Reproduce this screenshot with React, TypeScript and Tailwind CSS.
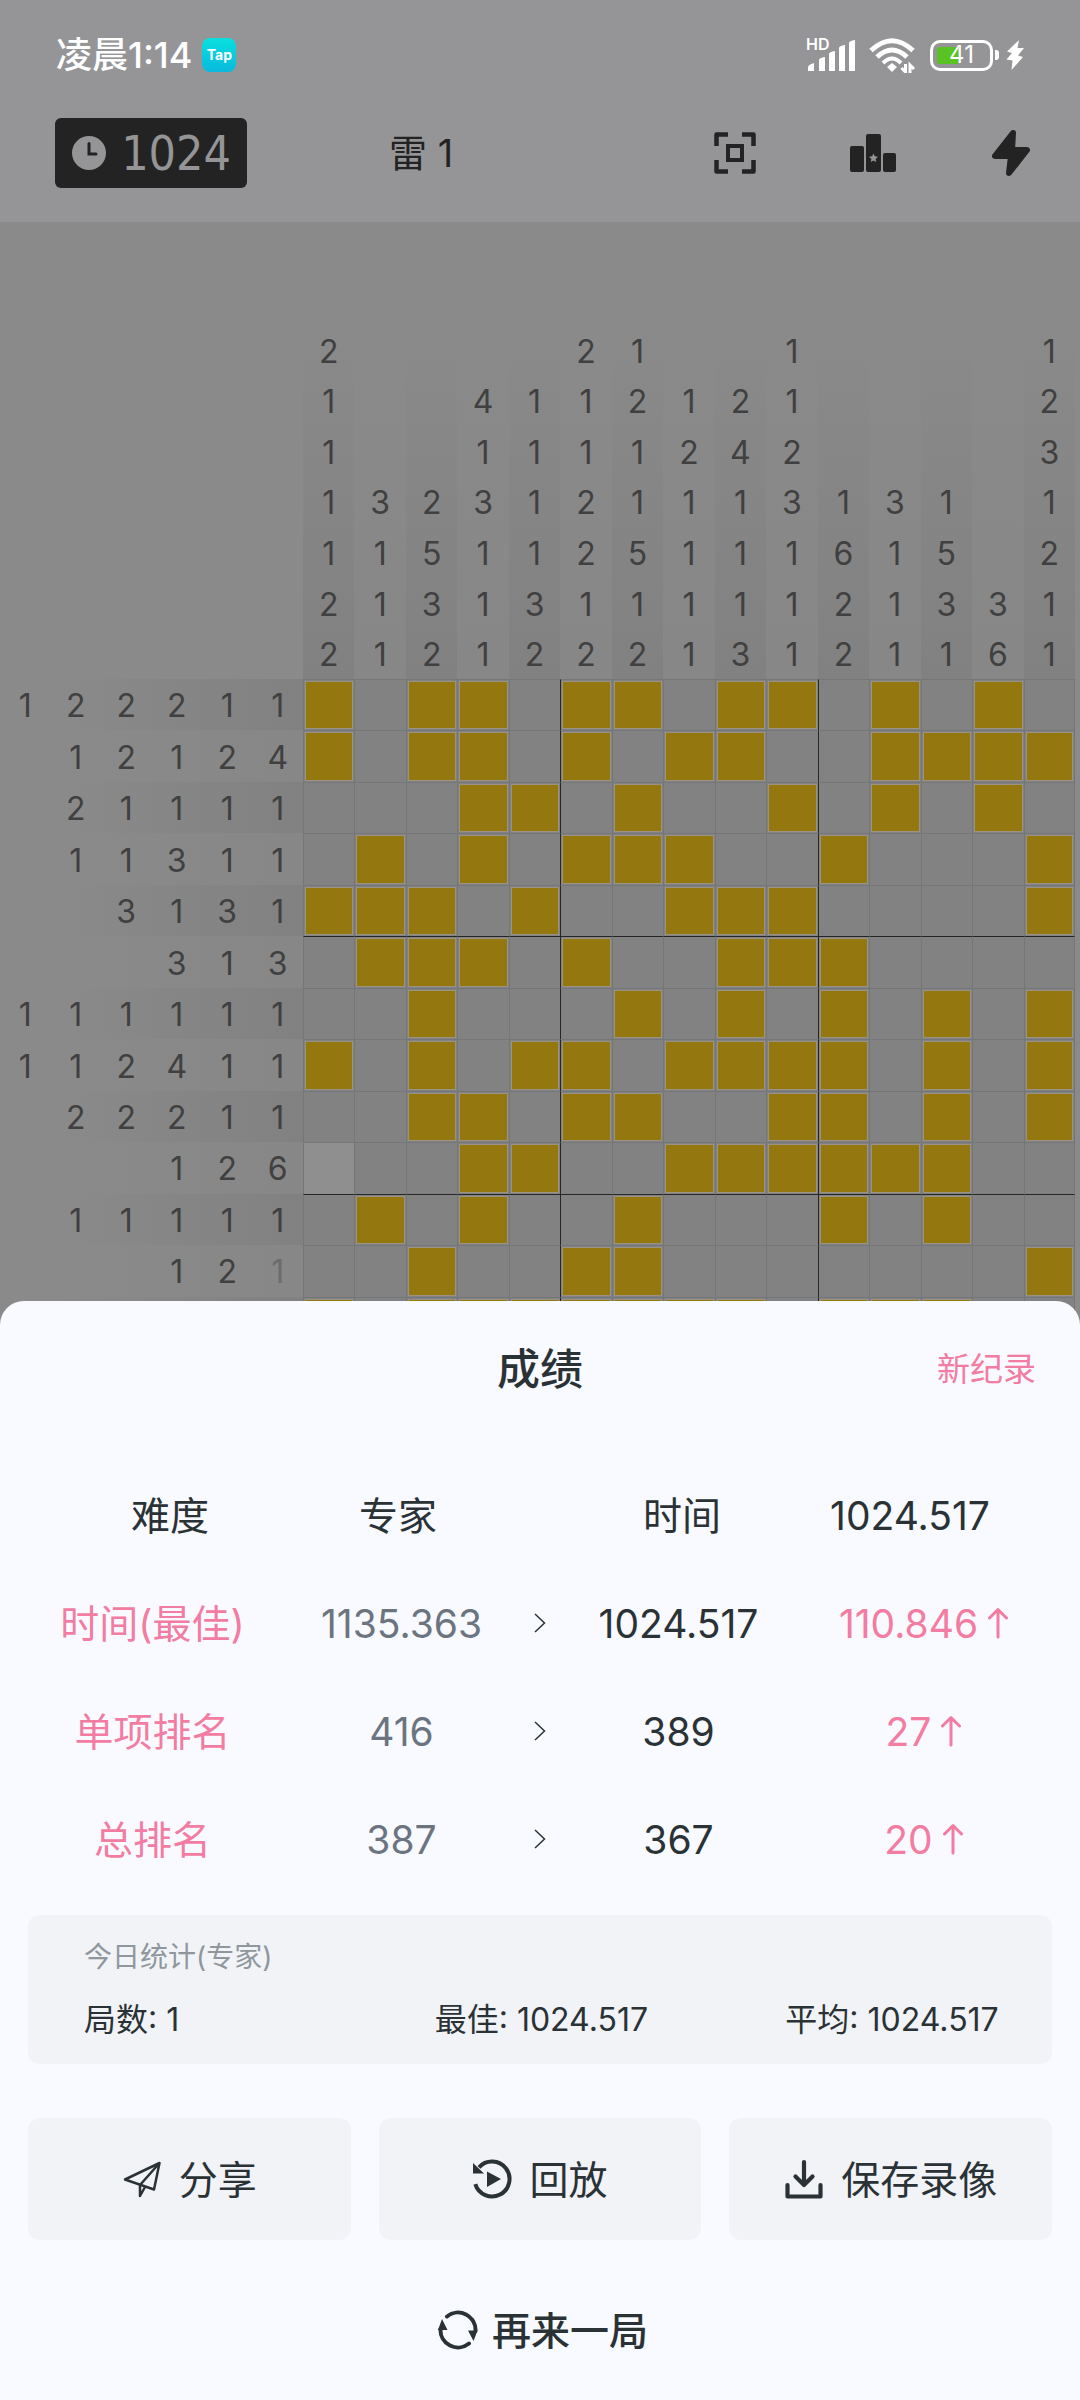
import React from 'react';

const rowClues: number[][] = [
  [1, 2, 2, 2, 1, 1],
  [1, 2, 1, 2, 4],
  [2, 1, 1, 1, 1],
  [1, 1, 3, 1, 1],
  [3, 1, 3, 1],
  [3, 1, 3],
  [1, 1, 1, 1, 1, 1],
  [1, 1, 2, 4, 1, 1],
  [2, 2, 2, 1, 1],
  [1, 2, 6],
  [1, 1, 1, 1, 1],
  [1, 2, 1],
  [],
];

const columnClues: number[][] = [
  [2, 1, 1, 1, 1, 2, 2],
  [3, 1, 1, 1],
  [2, 5, 3, 2],
  [4, 1, 3, 1, 1, 1],
  [1, 1, 1, 1, 3, 2],
  [2, 1, 1, 2, 2, 1, 2],
  [1, 2, 1, 1, 5, 1, 2],
  [1, 2, 1, 1, 1, 1],
  [2, 4, 1, 1, 1, 3],
  [1, 1, 2, 3, 1, 1, 1],
  [1, 6, 2, 2],
  [3, 1, 1, 1],
  [1, 5, 3, 1],
  [3, 6],
  [1, 2, 3, 1, 2, 1, 1],
];

// '#' = filled, 'o' = opened, '.' = untouched
const board: string[] = [
  '#.##.##.##.#.#.',
  '#.##.#.##..####',
  '...##.#..#.#.#.',
  '.#.#.###..#...#',
  '###.#..###....#',
  '.###.#..###....',
  '..#...#.#.#.#.#',
  '#.#.##.####.#.#',
  '..##.##..##.#.#',
  'o..##..######..',
  '.#.#..#...#.#..',
  '..#..##.......#',
  '#.#######.###..',
];

const records = [
  { label: '时间(最佳)', before: '1135.363', after: '1024.517', delta: '110.846' },
  { label: '单项排名', before: '416', after: '389', delta: '27' },
  { label: '总排名', before: '387', after: '367', delta: '20' },
];

const SignalIcon = () => (
  <svg viewBox="0 0 50 34" className="h-[34px] w-[50px]" fill="#fff" aria-hidden="true">
    <path d="M2 33v-4q0-2 6-4v8zM13 33V22q0-2 6-3v14zM23 33V16q0-2 6-3v20zM33 33V10q0-2 6-3v26zM43 33V5q0-2 6-3v31z" />
  </svg>
);

const WifiIcon = () => (
  <svg viewBox="0 0 48 36" className="h-9 w-12" fill="none" stroke="#fff" strokeWidth="5" aria-hidden="true">
    <path d="M3 13.500Q24 -6 45 13.500" />
    <path d="M9 20Q24 6 39 20" />
    <path d="M15 26Q24 17 33 26" strokeWidth="4" />
    <path d="M24 26l5 4-5 5-5-5z" fill="#fff" stroke="none" />
    <path d="M37.500 27v8l-4-4M42 36v-8l4 4" strokeWidth="3" />
  </svg>
);

const ChargeIcon = () => (
  <svg viewBox="0 0 18 30" className="h-[30px] w-[18px]" fill="#fff" aria-hidden="true">
    <path d="M13 0L1 11.500l5 1.500-5.500 6.500 6 1L5.500 30 17 17l-5-1.500L18 8h-6.500z" />
  </svg>
);

const ClockIcon = () => (
  <svg viewBox="0 0 34 34" className="h-[34px] w-[34px]" aria-hidden="true">
    <circle cx="17" cy="17" r="17" fill="#959597" />
    <path d="M17 7.500V18h7" fill="none" stroke="#232323" strokeWidth="3" strokeLinecap="round" />
  </svg>
);

const FocusIcon = () => (
  <svg viewBox="0 0 42 42" className="h-[42px] w-[42px]" fill="none" stroke="#232323" strokeWidth="4.500" strokeLinejoin="round" aria-hidden="true">
    <path d="M2.500 14V2.500H14M28 2.500h11.500V14M39.500 28v11.500H28M14 39.500H2.500V28" />
    <rect x="14" y="14" width="14" height="14" strokeWidth="4" strokeLinejoin="miter" />
  </svg>
);

const PodiumIcon = () => (
  <svg viewBox="0 0 46 38" className="h-[38px] w-[46px]" fill="#232323" aria-hidden="true">
    <rect x="0" y="12" width="14" height="26" rx="2" />
    <rect x="16" y="0" width="15" height="38" rx="2" />
    <rect x="33" y="19" width="13" height="19" rx="2" />
    <path d="M23.500 19.500l1.300 2.800 3.200.4-2.400 2.200.7 3.200-2.800-1.600-2.800 1.600.7-3.200-2.400-2.200 3.200-.4z" fill="#959597" />
  </svg>
);

const BoltIcon = () => (
  <svg viewBox="0 0 38 48" className="h-12 w-[38px]" fill="#232323" stroke="#232323" strokeWidth="6" strokeLinejoin="round" aria-hidden="true">
    <path d="M21 4L3 27h16l-2 17 18-23H20z" />
  </svg>
);

const ArrowUpIcon = () => (
  <svg viewBox="0 0 20 32" className="h-8 w-5" fill="none" stroke="#f27ca2" strokeWidth="3" strokeLinejoin="round" strokeLinecap="round" aria-hidden="true">
    <path d="M10 30V3M1.500 11L10 2.500l8.500 8.500" />
  </svg>
);

const ShareIcon = () => (
  <svg viewBox="0 0 40 40" className="h-10 w-10" fill="none" stroke="#2a3236" strokeWidth="2.500" strokeLinejoin="round" strokeLinecap="round" aria-hidden="true">
    <path d="M37.500 4L3 20.500l29 10zM37.500 4L18 26v11l5-9" />
  </svg>
);

const ReplayIcon = () => (
  <svg viewBox="0 0 40 40" className="h-10 w-10" aria-hidden="true">
    <path d="M3.300 25.200A17.500 17.500 0 1 0 7 8.300" fill="none" stroke="#2a3236" strokeWidth="4" />
    <path d="M1 4v10.500h11zM15 12.500V28l14-8z" fill="#2a3236" />
  </svg>
);

const DownloadIcon = () => (
  <svg viewBox="0 0 40 40" className="h-10 w-10" fill="none" stroke="#2a3236" strokeWidth="4.200" strokeLinecap="round" strokeLinejoin="round" aria-hidden="true">
    <path d="M20 3v22M11.500 17.500L20 26l8.500-8.500M3.500 26v11.500h33V26" />
  </svg>
);

const AgainIcon = () => (
  <svg viewBox="0 0 40 40" className="h-10 w-10" aria-hidden="true">
    <path d="M9 6.500A17.500 17.500 0 0 1 37.500 21M31 33.500A17.500 17.500 0 0 1 2.500 19" fill="none" stroke="#2a3236" strokeWidth="4" strokeLinecap="round" />
    <path d="M4 9l5.500 11H0zM35.500 31L30 20.500h9.500z" fill="#2a3236" />
  </svg>
);

const StatusBar = () => (
  <div className="flex h-[110px] items-center justify-between px-[56px] text-white">
    <div className="flex items-center gap-[10px]">
      <span className="text-[36px] font-medium leading-none">凌晨1:14</span>
      <span className="flex h-[34px] w-[34px] items-center justify-center rounded-[8px] bg-gradient-to-b from-[#0be0de] to-[#0ab9de] text-[14px] font-bold leading-none">
        Tap
      </span>
    </div>
    <div className="flex items-center">
      <div className="relative">
        <SignalIcon />
        <span className="absolute left-0 -top-[2px] text-[16px] font-semibold leading-none">HD</span>
      </div>
      <div className="ml-3">
        <WifiIcon />
      </div>
      <div className="relative ml-[14px] flex h-[31px] w-[63px] items-center justify-center rounded-[10px] border-[3px] border-white">
        <span className="absolute inset-y-1 left-1 w-[22px] rounded-[3px] bg-[#58c322]" />
        <span className="relative text-[24px] leading-none">41</span>
      </div>
      <span className="ml-[2px] h-[10px] w-1 rounded-r-[3px] bg-white" />
      <div className="ml-[7px]">
        <ChargeIcon />
      </div>
    </div>
  </div>
);

const Toolbar = () => (
  <div className="flex h-[86px] items-center pl-[55px] text-[#232323]">
    <div className="flex h-[70px] w-[192px] items-center justify-between rounded-[6px] bg-[#232323] pl-[17px] pr-[16px]">
      <ClockIcon />
      <span className="font-['Liberation_Sans_Narrow','DejaVu_Sans_Condensed',sans-serif] text-[48px] leading-none text-[#959597]">
        1024
      </span>
    </div>
    <h1 className="ml-[142px] flex-1 text-[38px] leading-none">雷 1</h1>
    <button type="button" aria-label="定位" className="flex w-[138px] justify-center">
      <FocusIcon />
    </button>
    <button type="button" aria-label="排行榜" className="flex w-[138px] justify-center">
      <PodiumIcon />
    </button>
    <button type="button" aria-label="闪电" className="flex w-[138px] justify-center">
      <BoltIcon />
    </button>
  </div>
);

const cellFill = (cell: string) => {
  if (cell === '#') {
    return <div className="h-full p-px"><div className="h-full border border-[#9a9382] bg-[#94770f]" /></div>;
  }
  if (cell === 'o') {
    return <div className="h-full bg-[#8f8f8f]" />;
  }
  return null;
};

const Board = () => (
  <div className="grid grid-cols-[303px_1fr] pr-[5px] pt-[103px] text-[32px] leading-none text-[#404040]">
    <div />
    <div className="grid h-[354px] grid-cols-15">
      {columnClues.map((clues, c) => (
        <div
          key={c}
          className={`grid grid-rows-7 bg-gradient-to-b from-[#8a8a8a] ${c % 2 === 0 ? 'to-[#818181]' : 'to-[#878787]'}`}
        >
          {Array.from({ length: 7 - clues.length }, (_, i) => <span key={`e${i}`} />)}
          {clues.map((n, i) => (
            <span key={i} className="flex items-center justify-center pt-[3px]">{n}</span>
          ))}
        </div>
      ))}
    </div>

    {board.map((line, r) => (
      <React.Fragment key={r}>
        <div
          className={`grid grid-cols-6 bg-gradient-to-r from-[#8a8a8a] from-20% ${r % 2 === 0 ? 'to-[#818181]' : 'to-[#878787]'}`}
        >
          {Array.from({ length: 6 - rowClues[r].length }, (_, i) => <span key={`e${i}`} />)}
          {rowClues[r].map((n, i) => (
            <span
              key={i}
              className={`flex items-center justify-center pt-[3px] ${r === 11 && i === 2 ? 'text-[#6c6c6c]' : ''}`}
            >
              {n}
            </span>
          ))}
        </div>
        <div className="grid grid-cols-15">
          {line.split('').map((cell, c) => (
            <div
              key={c}
              className={`aspect-square border-l border-t bg-[#828282] ${
                r > 0 && r % 5 === 0 ? 'border-t-[#262626]' : 'border-t-[#74767a]'
              } ${c > 0 && c % 5 === 0 ? 'border-l-[#262626]' : 'border-l-[#74767a]'} ${
                c === 14 ? 'border-r border-r-[#74767a]' : ''
              }`}
            >
              {cellFill(cell)}
            </div>
          ))}
        </div>
      </React.Fragment>
    ))}
  </div>
);

const ActionButton: React.FC<{ icon: React.ReactNode; label: string }> = ({ icon, label }) => (
  <button type="button" className="flex h-[122px] items-center justify-center gap-[17px] rounded-[12px] bg-[#f1f3f7] text-[39px] leading-none">
    {icon}
    {label}
  </button>
);

const ResultSheet = () => (
  <section
    role="dialog"
    aria-labelledby="result-title"
    className="fixed inset-x-0 bottom-0 rounded-t-[24px] bg-[#f8faff] px-7 pb-[32px] text-[#2a3236]"
  >
    <div className="grid h-[136px] grid-cols-3 items-center">
      <h2 id="result-title" className="col-start-2 text-center text-[43px] font-medium leading-none">成绩</h2>
      <span className="pr-4 text-right text-[33px] leading-none text-[#f27ca2]">新纪录</span>
    </div>

    <div className="mt-[24px] grid h-[108px] grid-cols-2 items-center gap-14 px-7 text-center text-[39px] leading-none">
      <dl className="grid grid-cols-2">
        <dt>难度</dt>
        <dd>专家</dd>
      </dl>
      <dl className="grid grid-cols-2">
        <dt>时间</dt>
        <dd>1024.517</dd>
      </dl>
    </div>

    <table className="w-full table-fixed text-center text-[39px] leading-none">
      <colgroup>
        <col />
        <col />
        <col className="w-7" />
        <col />
        <col />
      </colgroup>
      <tbody>
        {records.map((record) => (
          <tr key={record.label} className="h-[108px]">
            <th scope="row" className="whitespace-nowrap font-normal text-[#f27ca2]">{record.label}</th>
            <td className="text-[#6b747f]">{record.before}</td>
            <td>
              <svg viewBox="0 0 12 20" className="mx-auto h-5 w-3" fill="none" stroke="#2a3236" strokeWidth="1.500" aria-hidden="true">
                <path d="M1 1l9.500 9L1 19" />
              </svg>
            </td>
            <td>{record.after}</td>
            <td className="text-[#f27ca2]">
              <div className="flex items-center justify-center gap-[10px] pr-2">
                {record.delta}
                <ArrowUpIcon />
              </div>
            </td>
          </tr>
        ))}
      </tbody>
    </table>

    <div className="mt-[22px] h-[149px] rounded-[12px] bg-[#f1f3f7] pt-[28px]">
      <p className="pl-14 text-[28px] leading-[28px] text-[#90979c]">今日统计(专家)</p>
      <div className="mt-[33px] grid grid-cols-3 gap-7 text-[32px] leading-[32px]">
        <span className="whitespace-nowrap pl-14">局数: 1</span>
        <span className="whitespace-nowrap pl-14">最佳: 1024.517</span>
        <span className="whitespace-nowrap pl-14">平均: 1024.517</span>
      </div>
    </div>

    <div className="mt-[54px] grid grid-cols-3 gap-7">
      <ActionButton icon={<ShareIcon />} label="分享" />
      <ActionButton icon={<ReplayIcon />} label="回放" />
      <ActionButton icon={<DownloadIcon />} label="保存录像" />
    </div>

    <button type="button" className="mx-auto mt-[52px] flex h-[76px] items-center gap-[14px] pl-[6px] text-[39px] font-medium leading-none">
      <AgainIcon />
      再来一局
    </button>
  </section>
);

export default function App() {
  return (
    <div className="h-screen overflow-hidden bg-[#8a8a8a] font-['Inter','Noto_Sans_CJK_SC',sans-serif]">
      <header className="bg-[#959597] pb-[26px]">
        <StatusBar />
        <Toolbar />
      </header>
      <Board />
      <ResultSheet />
    </div>
  );
}
